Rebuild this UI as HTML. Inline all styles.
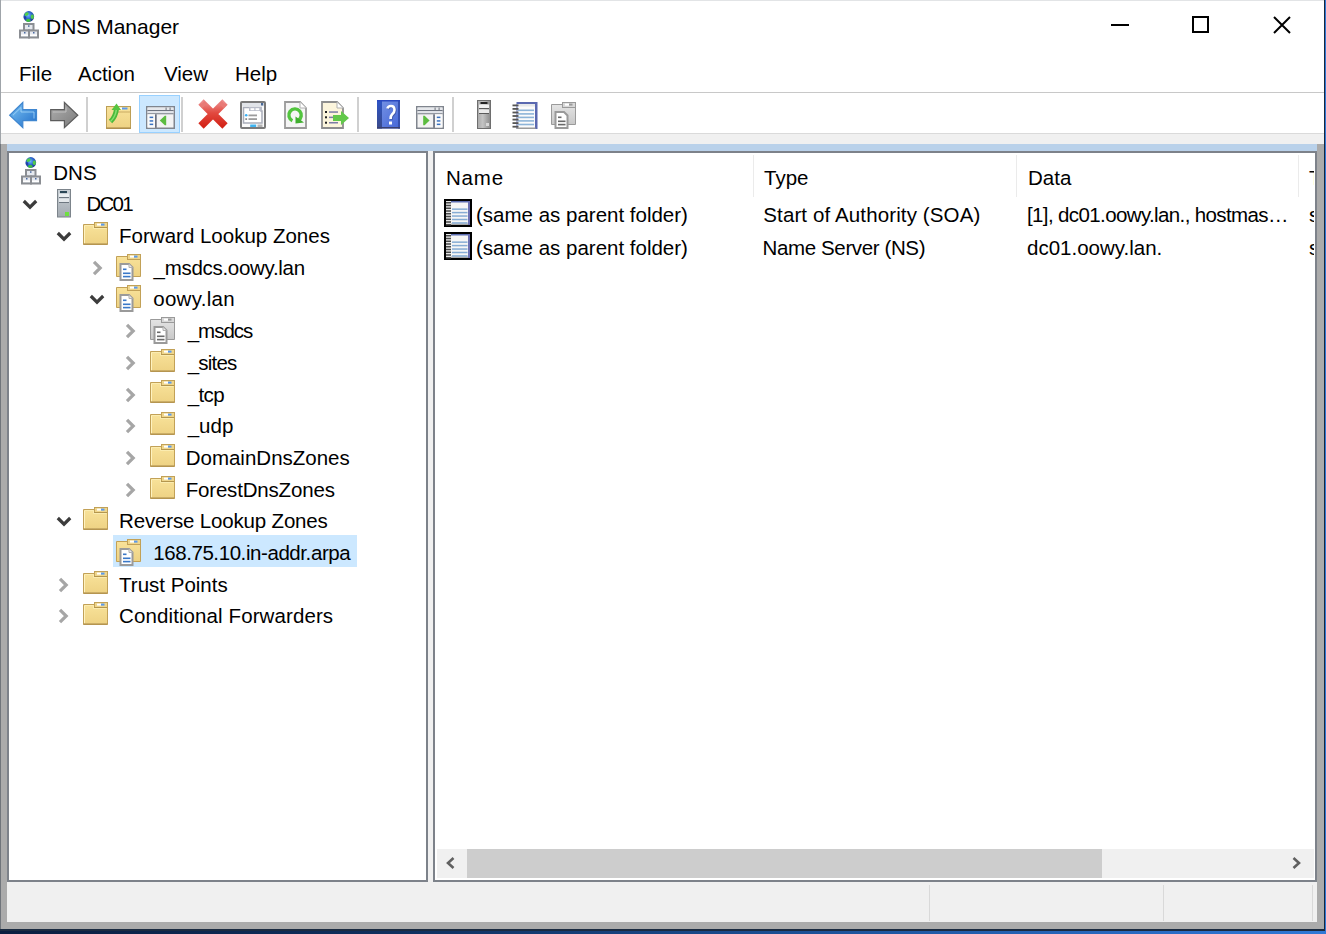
<!DOCTYPE html>
<html><head><meta charset="utf-8">
<style>
html,body{margin:0;padding:0;width:1326px;height:934px;overflow:hidden;position:relative;
 background:linear-gradient(90deg,#0a1e40 0%,#0f2f5e 30%,#1e56a0 66%,#2b6ec8 90%,#3079d6 100%);}
*{box-sizing:border-box}
.a{position:absolute}
.t{position:absolute;font-family:"Liberation Sans",sans-serif;font-size:20.5px;line-height:20px;white-space:nowrap;color:#000}
svg{position:absolute;overflow:visible}
</style></head><body>
<svg width="0" height="0" style="position:absolute">
<defs>
<linearGradient id="gFold" x1="0" y1="0" x2="0" y2="1"><stop offset="0" stop-color="#f8e29a"/><stop offset="1" stop-color="#eed283"/></linearGradient>
<linearGradient id="gFoldG" x1="0" y1="0" x2="0" y2="1"><stop offset="0" stop-color="#e4e4e4"/><stop offset="1" stop-color="#c8c8c8"/></linearGradient>
<radialGradient id="gGlobe" cx="0.45" cy="0.4" r="0.6"><stop offset="0" stop-color="#6ab8ff"/><stop offset="0.6" stop-color="#2a62c8"/><stop offset="1" stop-color="#1c3c8c"/></radialGradient>
<linearGradient id="gSrv" x1="0" y1="0" x2="0" y2="1"><stop offset="0" stop-color="#c9d0d6"/><stop offset="1" stop-color="#a3aab1"/></linearGradient>
<linearGradient id="gBlue" x1="0" y1="0" x2="1" y2="1"><stop offset="0" stop-color="#7cc4f4"/><stop offset="1" stop-color="#1f6cc8"/></linearGradient>
<linearGradient id="gGray" x1="0" y1="0" x2="1" y2="1"><stop offset="0" stop-color="#b0b0b0"/><stop offset="1" stop-color="#7a7a7a"/></linearGradient>
<linearGradient id="gRed" x1="0" y1="0" x2="0" y2="1"><stop offset="0" stop-color="#ec8a8a"/><stop offset="0.45" stop-color="#e24a40"/><stop offset="1" stop-color="#d42418"/></linearGradient>
<linearGradient id="gHelp" x1="0" y1="0" x2="1" y2="1"><stop offset="0" stop-color="#7a96e4"/><stop offset="1" stop-color="#4466d8"/></linearGradient><linearGradient id="gHelpL" x1="0" y1="0" x2="0" y2="1"><stop offset="0" stop-color="#2c54c8"/><stop offset="1" stop-color="#3a4a8a"/></linearGradient>
<linearGradient id="gSrvT" x1="0" y1="0" x2="1" y2="0"><stop offset="0" stop-color="#a8a8a8"/><stop offset="0.4" stop-color="#c4c4c4"/><stop offset="1" stop-color="#8a8a8a"/></linearGradient>
</defs></svg>

<div class="a" style="left:0px;top:0px;width:1325px;height:931px;background:#fff;"></div>
<div class="a" style="left:0px;top:0px;width:1325px;height:1px;background:#e2e4e6;"></div>
<div class="a" style="left:0px;top:0px;width:1px;height:931px;background:#9fa4a9;"></div>
<div class="a" style="left:0px;top:144px;width:1px;height:785px;background:#70757b;"></div>
<div class="a" style="left:1324px;top:0px;width:1px;height:931px;background:#17283f;"></div>
<div class="a" style="left:0px;top:929px;width:1325px;height:2px;background:#1b2b40;"></div>
<svg style="left:19px;top:11px" width="21" height="28" viewBox="0 0 21 28"><circle cx="9.8" cy="5.4" r="5.3" fill="url(#gGlobe)"/><ellipse cx="7.6" cy="3.2" rx="2.2" ry="1.6" fill="#4fd04a" transform="rotate(-30 7.6 3.2)"/><ellipse cx="13.3" cy="5.8" rx="1.6" ry="2.2" fill="#52c84c"/><ellipse cx="9.2" cy="9.3" rx="2.2" ry="1.6" fill="#3cc040"/><ellipse cx="6" cy="6.5" rx="1.2" ry="1.6" fill="#1f3fa8"/><rect x="5" y="13" width="9.5" height="6.5" fill="#e6e9ef" stroke="#8b8e93" stroke-width="2"/><rect x="9" y="14.3" width="1.5" height="1.5" fill="#4a6aa0"/><rect x="1" y="19.5" width="9" height="7" fill="#e6e9ef" stroke="#8b8e93" stroke-width="2"/><rect x="10" y="19.5" width="9" height="7" fill="#e6e9ef" stroke="#8b8e93" stroke-width="2"/><rect x="5" y="21" width="1.5" height="1.5" fill="#4a6aa0"/><rect x="14" y="21" width="1.5" height="1.5" fill="#4a6aa0"/><rect x="2" y="23.5" width="7" height="1.5" fill="#fff"/><rect x="11" y="23.5" width="7" height="1.5" fill="#fff"/></svg>
<div class="t" style="left:46px;top:17.0px;font-size:21px;">DNS Manager</div>
<div class="a" style="left:1111px;top:24px;width:18px;height:2px;background:#000;"></div>
<div class="a" style="left:1192px;top:16px;width:17px;height:17px;background:transparent;border:2px solid #000;"></div>
<svg style="left:1273px;top:16px" width="18" height="18" viewBox="0 0 18 18"><path d="M1 1L17 17M17 1L1 17" stroke="#000" stroke-width="2"/></svg>
<div class="t" style="left:19px;top:64.0px;">File</div>
<div class="t" style="left:78px;top:64.0px;">Action</div>
<div class="t" style="left:164px;top:64.0px;">View</div>
<div class="t" style="left:235px;top:64.0px;">Help</div>
<div class="a" style="left:1px;top:92px;width:1323px;height:1px;background:#c8c8c8;"></div>
<div class="a" style="left:1px;top:133px;width:1323px;height:1px;background:#dadada;"></div>
<div class="a" style="left:1px;top:134px;width:1323px;height:10px;background:#f0f0f0;"></div>
<svg style="left:9px;top:102px" width="29" height="27" viewBox="0 0 29 27"><path d="M0.7 13.2L13.8 0.5V7.6H27.5V18.7H13.8V25.7Z" fill="url(#gBlue)" stroke="#3f86d0" stroke-width="1.2"/><path d="M4 13.2L12 5.5V10H25V16.5" fill="none" stroke="#a8d8fa" stroke-width="1" opacity="0.8"/></svg>
<svg style="left:50px;top:102px" width="29" height="27" viewBox="0 0 29 27"><path d="M27.8 13.2L14.4 0.5V7.6H0.7V18.7H14.4V25.7Z" fill="url(#gGray)" stroke="#5c5c5c" stroke-width="1.2"/><path d="M3 10H16V5.5" fill="none" stroke="#c8c8c8" stroke-width="1" opacity="0.8"/></svg>
<div class="a" style="left:86px;top:97px;width:2px;height:35px;background:#d0d0d0;"></div>
<svg style="left:106px;top:103px" width="25" height="26" viewBox="0 0 25 26"><rect x="0.5" y="3.5" width="24" height="22" fill="url(#gFold)" stroke="#bd9f56"/><rect x="16" y="4.5" width="5.5" height="2" fill="#5a9aee"/><rect x="13" y="4.5" width="3" height="2" fill="#fff"/><line x1="12" y1="9" x2="24" y2="9" stroke="#c9ab62"/><line x1="0.5" y1="25" x2="24.5" y2="25" stroke="#a08044"/><path d="M4.5 18.5Q9.5 14 10.5 6" fill="none" stroke="#4cb83a" stroke-width="5"/><path d="M4.5 18.5Q9.5 14 10.5 6" fill="none" stroke="#86e070" stroke-width="1.5"/><path d="M5.5 7L10.5 0.5L15 7Z" fill="#56c440"/></svg>
<div class="a" style="left:139px;top:95px;width:41px;height:38px;background:#cce8ff;border:1px solid #99d1ff;"></div>
<svg style="left:146px;top:106px" width="29" height="23" viewBox="0 0 29 23"><rect x="0.75" y="0.75" width="27.5" height="21.5" fill="#f3f3f3" stroke="#80858e" stroke-width="1.5"/><rect x="1.5" y="1.5" width="26" height="2.5" fill="#e6e8ec"/><rect x="19.5" y="1.5" width="1.2" height="2.5" fill="#80858e"/><rect x="23.5" y="1.5" width="1.2" height="2.5" fill="#80858e"/><rect x="1.5" y="4" width="26" height="1.2" fill="#6e7480"/><rect x="1.5" y="5.2" width="26" height="1.9" fill="#e1e4ea"/><rect x="1.5" y="7.1" width="26" height="1.2" fill="#8a8f98"/><rect x="1.5" y="8.3" width="7.5" height="13.2" fill="#fafafa"/><rect x="9" y="8.3" width="1.7" height="13.5" fill="#6a7080"/><rect x="3.6" y="10.6" width="3.6" height="1.5" fill="#3a72c0"/><rect x="3.6" y="14.2" width="3.6" height="1.5" fill="#3a72c0"/><rect x="3.6" y="17.6" width="3.6" height="1.5" fill="#3a72c0"/><path d="M13.8 14.5L18.8 9.8H20.2V19.2H18.8Z" fill="#5cbc40"/></svg>
<div class="a" style="left:181px;top:97px;width:2px;height:35px;background:#d0d0d0;"></div>
<svg style="left:199px;top:100px" width="28" height="28" viewBox="0 0 28 28"><path d="M2 2L26 26M26 2L2 26" stroke="url(#gRed)" stroke-width="7.5" stroke-linecap="butt"/><path d="M1 5.5L5.5 1L8 3.5L3.5 8Z M27 5.5L22.5 1L20 3.5L24.5 8Z" fill="#e87a76"/></svg>
<svg style="left:240px;top:101px" width="26" height="28" viewBox="0 0 26 28"><rect x="1" y="1" width="24" height="26" rx="1" fill="#fafafa" stroke="#7a7a7a" stroke-width="2"/><rect x="2" y="2" width="22" height="3.2" fill="#e1e4e9"/><rect x="21" y="2" width="2.2" height="2.5" fill="#4a6a98"/><path d="M3.5 6.5H21V10H22V22H3.5Z" fill="#fff" stroke="#a9adb9" stroke-width="1.5"/><rect x="9" y="6" width="12.5" height="4" fill="#b9bdc9"/><rect x="10.5" y="7.2" width="3.8" height="2" fill="#fff"/><rect x="15.5" y="7.2" width="3.8" height="2" fill="#fff"/><circle cx="6.2" cy="14.3" r="1.3" fill="#3ab0f4"/><rect x="8.5" y="13.5" width="8.5" height="1.8" fill="#9c9c9c"/><rect x="5.3" y="17.2" width="1.8" height="1.8" fill="#8a8a8a"/><rect x="8.5" y="17.2" width="8.5" height="1.8" fill="#9c9c9c"/><rect x="10.2" y="23.5" width="6" height="2.5" fill="#3fb4f0"/><rect x="17.5" y="23.5" width="5" height="2.5" fill="#b4b4b4"/></svg>
<svg style="left:284px;top:101px" width="23" height="28" viewBox="0 0 23 28"><path d="M1 1H16L22 7V27H1Z" fill="#f5f5f5" stroke="#9a9a9a" stroke-width="1.8"/><path d="M16 1V7H22" fill="#fff" stroke="#b0b0b0" stroke-width="1"/><path d="M8.4 19.7A6.2 6.2 0 1 1 14.1 19.5" fill="none" stroke="#52c43e" stroke-width="3.4"/><path d="M11.5 15.5V22.5L20 21.5Z" fill="#3fae2e"/></svg>
<svg style="left:321px;top:101px" width="29" height="28" viewBox="0 0 29 28"><path d="M1 1H16L22 7V27H1Z" fill="#fcf5dc" stroke="#8e8e8e" stroke-width="1.8"/><path d="M16 1V7H22" fill="#fff" stroke="#b0b0b0" stroke-width="1"/><rect x="4" y="10" width="2" height="2" fill="#222"/><rect x="8" y="10.3" width="9" height="1.5" fill="#7c7ca6"/><rect x="4" y="15.3" width="2" height="2" fill="#222"/><rect x="8" y="15.6" width="9" height="1.5" fill="#7c7ca6"/><rect x="4" y="20.7" width="2" height="2" fill="#222"/><rect x="8" y="21" width="9" height="1.5" fill="#7c7ca6"/><path d="M12 14H20V10L28 17L20 24V20H12Z" fill="#62c84a"/></svg>
<div class="a" style="left:357px;top:97px;width:2px;height:35px;background:#d0d0d0;"></div>
<svg style="left:377px;top:100px" width="23" height="29" viewBox="0 0 23 29"><rect x="0" y="0" width="23" height="28.5" fill="url(#gHelp)"/><rect x="0" y="0" width="5" height="28.5" fill="url(#gHelpL)"/><rect x="21" y="0" width="2" height="28.5" fill="#3550b0"/><rect x="0" y="0" width="23" height="1.5" fill="#2a48c0"/><rect x="0" y="27" width="23" height="1.5" fill="#3a4070"/><path d="M10.5 8.5Q11 6 14 6Q17.5 6 17.5 10Q17.5 12.5 15 14.5Q13.6 15.8 13.6 19" fill="none" stroke="#2a3a7a" stroke-width="2.6" opacity="0.5" transform="translate(0.8,0.8)"/><path d="M10.5 8.5Q11 6 14 6Q17.5 6 17.5 10Q17.5 12.5 15 14.5Q13.6 15.8 13.6 19" fill="none" stroke="#fff" stroke-width="2.6"/><rect x="12" y="21.5" width="3" height="3" fill="#fff"/></svg>
<svg style="left:416px;top:106px" width="28" height="23" viewBox="0 0 28 23"><rect x="0.75" y="0.75" width="26.5" height="21.5" fill="#f3f3f3" stroke="#80858e" stroke-width="1.5"/><rect x="1.5" y="1.5" width="25" height="2.5" fill="#e6e8ec"/><rect x="18.5" y="1.5" width="1.2" height="2.5" fill="#80858e"/><rect x="22.5" y="1.5" width="1.2" height="2.5" fill="#80858e"/><rect x="1.5" y="4" width="25" height="1.2" fill="#6e7480"/><rect x="1.5" y="5.2" width="25" height="1.9" fill="#e1e4ea"/><rect x="1.5" y="7.1" width="25" height="1.2" fill="#8a8f98"/><rect x="18.8" y="8.3" width="7.7" height="13.2" fill="#fafafa"/><rect x="17.2" y="8.3" width="1.7" height="13.5" fill="#6a7080"/><rect x="20.8" y="10.6" width="3.6" height="1.5" fill="#3a72c0"/><rect x="20.8" y="14.2" width="3.6" height="1.5" fill="#3a72c0"/><rect x="20.8" y="17.6" width="3.6" height="1.5" fill="#3a72c0"/><path d="M7.2 9.8H8.6L13.6 14.5L8.6 19.2H7.2Z" fill="#5cbc40"/></svg>
<div class="a" style="left:452px;top:97px;width:2px;height:35px;background:#d0d0d0;"></div>
<svg style="left:477px;top:100px" width="14" height="29" viewBox="0 0 14 29"><rect x="0.5" y="0.5" width="13" height="28" fill="url(#gSrvT)" stroke="#6e6e6e"/><rect x="3.5" y="2" width="7" height="2" fill="#222"/><rect x="2" y="4.5" width="10" height="3.5" fill="#f0f0f0"/><rect x="2" y="8" width="10" height="1" fill="#5a5a5a"/><rect x="2" y="9.5" width="10" height="3.5" fill="#eaeaea"/><rect x="2" y="13" width="10" height="1" fill="#5a5a5a"/><rect x="9" y="23" width="3" height="3" fill="#d8d8d8"/></svg>
<svg style="left:512px;top:102px" width="26" height="27" viewBox="0 0 26 27"><rect x="4.5" y="0" width="21" height="27" fill="#5a68b0"/><rect x="5.5" y="2" width="17.5" height="24" fill="#fbfbfb"/><rect x="5.5" y="2" width="17.5" height="2.5" fill="#e6e8ea"/><rect x="6" y="7.5" width="16" height="1.6" fill="#8db4d8"/><rect x="6" y="11.1" width="16" height="1.6" fill="#8db4d8"/><rect x="6" y="14.6" width="16" height="1.6" fill="#8db4d8"/><rect x="6" y="18.1" width="16" height="1.6" fill="#8db4d8"/><rect x="6" y="21.7" width="16" height="1.6" fill="#8db4d8"/><rect x="4.5" y="25.5" width="19" height="1.5" fill="#9a9a9a"/><rect x="0.5" y="2.5" width="6" height="1.8" fill="#555"/><rect x="0.5" y="6.0" width="6" height="1.8" fill="#555"/><rect x="0.5" y="9.6" width="6" height="1.8" fill="#555"/><rect x="0.5" y="13.1" width="6" height="1.8" fill="#555"/><rect x="0.5" y="16.7" width="6" height="1.8" fill="#555"/><rect x="0.5" y="20.2" width="6" height="1.8" fill="#555"/><rect x="0.5" y="23.8" width="6" height="1.8" fill="#555"/></svg>
<svg style="left:551px;top:102px" width="26" height="27" viewBox="0 0 26 27"><path d="M0.5 2.5H11.5V5.5H24.5V22.5H0.5Z" fill="url(#gFoldG)" stroke="#9a9a9a"/><rect x="11.5" y="0.5" width="13" height="5" fill="#d8d8d8" stroke="#9a9a9a"/><rect x="14" y="1.6" width="4" height="2" fill="#fff"/><rect x="18" y="1.6" width="3.5" height="2" fill="#9a9a9a"/><g transform="translate(3.5,9)"><path d="M1 1H9.5L13 4.5V17H1Z" fill="#fff" stroke="#9a9a9a" stroke-width="2"/><rect x="3.5" y="5.5" width="3.5" height="1.6" fill="#6a6a6a"/><rect x="3.5" y="9.5" width="7.5" height="1.6" fill="#6a6a6a"/><rect x="3.5" y="12.8" width="7.5" height="1.6" fill="#6a6a6a"/></g></svg>
<div class="a" style="left:1px;top:144px;width:1323px;height:785px;background:#ababab;"></div>
<div class="a" style="left:7px;top:144px;width:1310px;height:7px;background:#b9d1ea;"></div>
<div class="a" style="left:7px;top:151px;width:421px;height:731px;background:#fff;border:2px solid #7d828a;"></div>
<div class="a" style="left:428px;top:151px;width:5px;height:731px;background:#f0f0f0;"></div>
<div class="a" style="left:433px;top:151px;width:884px;height:731px;background:#fff;border:2px solid #7d828a;"></div>
<div class="a" style="left:7px;top:882px;width:1310px;height:40px;background:#f0f0f0;"></div>
<div class="a" style="left:113px;top:535px;width:244px;height:32px;background:#cce8ff;"></div>
<svg style="left:21px;top:157px" width="21" height="28" viewBox="0 0 21 28"><circle cx="9.8" cy="5.4" r="5.3" fill="url(#gGlobe)"/><ellipse cx="7.6" cy="3.2" rx="2.2" ry="1.6" fill="#4fd04a" transform="rotate(-30 7.6 3.2)"/><ellipse cx="13.3" cy="5.8" rx="1.6" ry="2.2" fill="#52c84c"/><ellipse cx="9.2" cy="9.3" rx="2.2" ry="1.6" fill="#3cc040"/><ellipse cx="6" cy="6.5" rx="1.2" ry="1.6" fill="#1f3fa8"/><rect x="5" y="13" width="9.5" height="6.5" fill="#e6e9ef" stroke="#8b8e93" stroke-width="2"/><rect x="9" y="14.3" width="1.5" height="1.5" fill="#4a6aa0"/><rect x="1" y="19.5" width="9" height="7" fill="#e6e9ef" stroke="#8b8e93" stroke-width="2"/><rect x="10" y="19.5" width="9" height="7" fill="#e6e9ef" stroke="#8b8e93" stroke-width="2"/><rect x="5" y="21" width="1.5" height="1.5" fill="#4a6aa0"/><rect x="14" y="21" width="1.5" height="1.5" fill="#4a6aa0"/><rect x="2" y="23.5" width="7" height="1.5" fill="#fff"/><rect x="11" y="23.5" width="7" height="1.5" fill="#fff"/></svg>
<div class="t" style="left:53.3px;top:162.6px;">DNS</div>
<svg style="left:22.2px;top:199.1px" width="16" height="12" viewBox="0 0 16 12"><polyline points="1.8,2 8,8.2 14.2,2" fill="none" stroke="#3c3c3c" stroke-width="3.2"/></svg>
<svg style="left:57px;top:189px" width="14" height="29" viewBox="0 0 14 29"><rect x="0.5" y="0.5" width="13" height="27.5" fill="url(#gSrv)" stroke="#7c848b"/><rect x="3" y="2" width="7" height="2.2" fill="#2a4656"/><rect x="2" y="4.5" width="10" height="3.5" fill="#e9edf0"/><rect x="2" y="8" width="10" height="1" fill="#6d7780"/><rect x="2" y="9.5" width="10" height="3.5" fill="#e4e8eb"/><rect x="2" y="13" width="10" height="1" fill="#6d7780"/><rect x="8" y="23" width="4" height="4" fill="#6fe040"/></svg>
<div class="t" style="left:86.6px;top:194.3px;letter-spacing:-1.8px">DC01</div>
<svg style="left:55.7px;top:230.8px" width="16" height="12" viewBox="0 0 16 12"><polyline points="1.8,2 8,8.2 14.2,2" fill="none" stroke="#3c3c3c" stroke-width="3.2"/></svg>
<svg style="left:83px;top:222px" width="25" height="23" viewBox="0 0 25 23"><path d="M0.5 2.5H11.5V5.5H24.5V22.5H0.5Z" fill="url(#gFold)" stroke="#c2a157"/><rect x="11.5" y="0.5" width="13" height="5" fill="#efd68c" stroke="#c2a157"/><rect x="14" y="1.6" width="4" height="2" fill="#fff"/><rect x="18" y="1.6" width="3.5" height="2" fill="#5a9aee"/><path d="M1.5 3.5H10.5V6.5H23.5" fill="none" stroke="#fbecb0"/><line x1="1.5" y1="4" x2="1.5" y2="21.5" stroke="#fff3c0"/><line x1="11" y1="5.5" x2="24" y2="5.5" stroke="#b4964e"/><line x1="0.5" y1="22" x2="24.5" y2="22" stroke="#a8894a"/></svg>
<div class="t" style="left:119.1px;top:226.0px;">Forward Lookup Zones</div>
<svg style="left:91.8px;top:259.7px" width="12" height="16" viewBox="0 0 12 16"><polyline points="2,1.8 8.2,8 2,14.2" fill="none" stroke="#a6a6a6" stroke-width="3.2"/></svg>
<svg style="left:116px;top:254px" width="26" height="27" viewBox="0 0 26 27"><path d="M0.5 2.5H11.5V5.5H24.5V22.5H0.5Z" fill="url(#gFold)" stroke="#c2a157"/><rect x="11.5" y="0.5" width="13" height="5" fill="#efd68c" stroke="#c2a157"/><rect x="14" y="1.6" width="4" height="2" fill="#fff"/><rect x="18" y="1.6" width="3.5" height="2" fill="#5a9aee"/><g transform="translate(3.5,9)"><path d="M1 1H9.5L13 4.5V17H1Z" fill="#fff" stroke="#9a9a9a" stroke-width="2"/><path d="M9.5 1V4.5H13" fill="#e8e8e8" stroke="#b0b0b0" stroke-width="1"/><rect x="3.5" y="5.5" width="3.5" height="1.6" fill="#3a78c8"/><rect x="3.5" y="9.5" width="7.5" height="1.6" fill="#3a78c8"/><rect x="3.5" y="12.8" width="7.5" height="1.6" fill="#3a78c8"/></g></svg>
<div class="t" style="left:153.6px;top:257.7px;letter-spacing:-0.3px">_msdcs.oowy.lan</div>
<svg style="left:89.2px;top:294.2px" width="16" height="12" viewBox="0 0 16 12"><polyline points="1.8,2 8,8.2 14.2,2" fill="none" stroke="#3c3c3c" stroke-width="3.2"/></svg>
<svg style="left:116px;top:285px" width="26" height="27" viewBox="0 0 26 27"><path d="M0.5 2.5H11.5V5.5H24.5V22.5H0.5Z" fill="url(#gFold)" stroke="#c2a157"/><rect x="11.5" y="0.5" width="13" height="5" fill="#efd68c" stroke="#c2a157"/><rect x="14" y="1.6" width="4" height="2" fill="#fff"/><rect x="18" y="1.6" width="3.5" height="2" fill="#5a9aee"/><g transform="translate(3.5,9)"><path d="M1 1H9.5L13 4.5V17H1Z" fill="#fff" stroke="#9a9a9a" stroke-width="2"/><path d="M9.5 1V4.5H13" fill="#e8e8e8" stroke="#b0b0b0" stroke-width="1"/><rect x="3.5" y="5.5" width="3.5" height="1.6" fill="#3a78c8"/><rect x="3.5" y="9.5" width="7.5" height="1.6" fill="#3a78c8"/><rect x="3.5" y="12.8" width="7.5" height="1.6" fill="#3a78c8"/></g></svg>
<div class="t" style="left:153.2px;top:289.4px;letter-spacing:0.3px">oowy.lan</div>
<svg style="left:125.29999999999998px;top:323.1px" width="12" height="16" viewBox="0 0 12 16"><polyline points="2,1.8 8.2,8 2,14.2" fill="none" stroke="#a6a6a6" stroke-width="3.2"/></svg>
<svg style="left:150px;top:317px" width="26" height="27" viewBox="0 0 26 27"><path d="M0.5 2.5H11.5V5.5H24.5V22.5H0.5Z" fill="url(#gFoldG)" stroke="#9a9a9a"/><rect x="11.5" y="0.5" width="13" height="5" fill="#d8d8d8" stroke="#9a9a9a"/><rect x="14" y="1.6" width="4" height="2" fill="#fff"/><rect x="18" y="1.6" width="3.5" height="2" fill="#9a9a9a"/><g transform="translate(3.5,9)"><path d="M1 1H9.5L13 4.5V17H1Z" fill="#fff" stroke="#9a9a9a" stroke-width="2"/><path d="M9.5 1V4.5H13" fill="#e8e8e8" stroke="#b0b0b0" stroke-width="1"/><rect x="3.5" y="5.5" width="3.5" height="1.6" fill="#6a6a6a"/><rect x="3.5" y="9.5" width="7.5" height="1.6" fill="#6a6a6a"/><rect x="3.5" y="12.8" width="7.5" height="1.6" fill="#6a6a6a"/></g></svg>
<div class="t" style="left:187.7px;top:321.1px;letter-spacing:-1.0px">_msdcs</div>
<svg style="left:125.29999999999998px;top:354.79999999999995px" width="12" height="16" viewBox="0 0 12 16"><polyline points="2,1.8 8.2,8 2,14.2" fill="none" stroke="#a6a6a6" stroke-width="3.2"/></svg>
<svg style="left:150px;top:349px" width="25" height="23" viewBox="0 0 25 23"><path d="M0.5 2.5H11.5V5.5H24.5V22.5H0.5Z" fill="url(#gFold)" stroke="#c2a157"/><rect x="11.5" y="0.5" width="13" height="5" fill="#efd68c" stroke="#c2a157"/><rect x="14" y="1.6" width="4" height="2" fill="#fff"/><rect x="18" y="1.6" width="3.5" height="2" fill="#5a9aee"/><path d="M1.5 3.5H10.5V6.5H23.5" fill="none" stroke="#fbecb0"/><line x1="1.5" y1="4" x2="1.5" y2="21.5" stroke="#fff3c0"/><line x1="11" y1="5.5" x2="24" y2="5.5" stroke="#b4964e"/><line x1="0.5" y1="22" x2="24.5" y2="22" stroke="#a8894a"/></svg>
<div class="t" style="left:187.7px;top:352.8px;letter-spacing:-0.8px">_sites</div>
<svg style="left:125.29999999999998px;top:386.5px" width="12" height="16" viewBox="0 0 12 16"><polyline points="2,1.8 8.2,8 2,14.2" fill="none" stroke="#a6a6a6" stroke-width="3.2"/></svg>
<svg style="left:150px;top:380px" width="25" height="23" viewBox="0 0 25 23"><path d="M0.5 2.5H11.5V5.5H24.5V22.5H0.5Z" fill="url(#gFold)" stroke="#c2a157"/><rect x="11.5" y="0.5" width="13" height="5" fill="#efd68c" stroke="#c2a157"/><rect x="14" y="1.6" width="4" height="2" fill="#fff"/><rect x="18" y="1.6" width="3.5" height="2" fill="#5a9aee"/><path d="M1.5 3.5H10.5V6.5H23.5" fill="none" stroke="#fbecb0"/><line x1="1.5" y1="4" x2="1.5" y2="21.5" stroke="#fff3c0"/><line x1="11" y1="5.5" x2="24" y2="5.5" stroke="#b4964e"/><line x1="0.5" y1="22" x2="24.5" y2="22" stroke="#a8894a"/></svg>
<div class="t" style="left:187.7px;top:384.5px;letter-spacing:-0.6px">_tcp</div>
<svg style="left:125.29999999999998px;top:418.2px" width="12" height="16" viewBox="0 0 12 16"><polyline points="2,1.8 8.2,8 2,14.2" fill="none" stroke="#a6a6a6" stroke-width="3.2"/></svg>
<svg style="left:150px;top:412px" width="25" height="23" viewBox="0 0 25 23"><path d="M0.5 2.5H11.5V5.5H24.5V22.5H0.5Z" fill="url(#gFold)" stroke="#c2a157"/><rect x="11.5" y="0.5" width="13" height="5" fill="#efd68c" stroke="#c2a157"/><rect x="14" y="1.6" width="4" height="2" fill="#fff"/><rect x="18" y="1.6" width="3.5" height="2" fill="#5a9aee"/><path d="M1.5 3.5H10.5V6.5H23.5" fill="none" stroke="#fbecb0"/><line x1="1.5" y1="4" x2="1.5" y2="21.5" stroke="#fff3c0"/><line x1="11" y1="5.5" x2="24" y2="5.5" stroke="#b4964e"/><line x1="0.5" y1="22" x2="24.5" y2="22" stroke="#a8894a"/></svg>
<div class="t" style="left:187.7px;top:416.2px;">_udp</div>
<svg style="left:125.29999999999998px;top:449.9px" width="12" height="16" viewBox="0 0 12 16"><polyline points="2,1.8 8.2,8 2,14.2" fill="none" stroke="#a6a6a6" stroke-width="3.2"/></svg>
<svg style="left:150px;top:444px" width="25" height="23" viewBox="0 0 25 23"><path d="M0.5 2.5H11.5V5.5H24.5V22.5H0.5Z" fill="url(#gFold)" stroke="#c2a157"/><rect x="11.5" y="0.5" width="13" height="5" fill="#efd68c" stroke="#c2a157"/><rect x="14" y="1.6" width="4" height="2" fill="#fff"/><rect x="18" y="1.6" width="3.5" height="2" fill="#5a9aee"/><path d="M1.5 3.5H10.5V6.5H23.5" fill="none" stroke="#fbecb0"/><line x1="1.5" y1="4" x2="1.5" y2="21.5" stroke="#fff3c0"/><line x1="11" y1="5.5" x2="24" y2="5.5" stroke="#b4964e"/><line x1="0.5" y1="22" x2="24.5" y2="22" stroke="#a8894a"/></svg>
<div class="t" style="left:185.7px;top:447.9px;">DomainDnsZones</div>
<svg style="left:125.29999999999998px;top:481.6px" width="12" height="16" viewBox="0 0 12 16"><polyline points="2,1.8 8.2,8 2,14.2" fill="none" stroke="#a6a6a6" stroke-width="3.2"/></svg>
<svg style="left:150px;top:476px" width="25" height="23" viewBox="0 0 25 23"><path d="M0.5 2.5H11.5V5.5H24.5V22.5H0.5Z" fill="url(#gFold)" stroke="#c2a157"/><rect x="11.5" y="0.5" width="13" height="5" fill="#efd68c" stroke="#c2a157"/><rect x="14" y="1.6" width="4" height="2" fill="#fff"/><rect x="18" y="1.6" width="3.5" height="2" fill="#5a9aee"/><path d="M1.5 3.5H10.5V6.5H23.5" fill="none" stroke="#fbecb0"/><line x1="1.5" y1="4" x2="1.5" y2="21.5" stroke="#fff3c0"/><line x1="11" y1="5.5" x2="24" y2="5.5" stroke="#b4964e"/><line x1="0.5" y1="22" x2="24.5" y2="22" stroke="#a8894a"/></svg>
<div class="t" style="left:185.7px;top:479.6px;letter-spacing:-0.18px">ForestDnsZones</div>
<svg style="left:55.7px;top:516.0999999999999px" width="16" height="12" viewBox="0 0 16 12"><polyline points="1.8,2 8,8.2 14.2,2" fill="none" stroke="#3c3c3c" stroke-width="3.2"/></svg>
<svg style="left:83px;top:507px" width="25" height="23" viewBox="0 0 25 23"><path d="M0.5 2.5H11.5V5.5H24.5V22.5H0.5Z" fill="url(#gFold)" stroke="#c2a157"/><rect x="11.5" y="0.5" width="13" height="5" fill="#efd68c" stroke="#c2a157"/><rect x="14" y="1.6" width="4" height="2" fill="#fff"/><rect x="18" y="1.6" width="3.5" height="2" fill="#5a9aee"/><path d="M1.5 3.5H10.5V6.5H23.5" fill="none" stroke="#fbecb0"/><line x1="1.5" y1="4" x2="1.5" y2="21.5" stroke="#fff3c0"/><line x1="11" y1="5.5" x2="24" y2="5.5" stroke="#b4964e"/><line x1="0.5" y1="22" x2="24.5" y2="22" stroke="#a8894a"/></svg>
<div class="t" style="left:119.1px;top:511.3px;letter-spacing:-0.17px">Reverse Lookup Zones</div>
<svg style="left:116px;top:539px" width="26" height="27" viewBox="0 0 26 27"><path d="M0.5 2.5H11.5V5.5H24.5V22.5H0.5Z" fill="url(#gFold)" stroke="#c2a157"/><rect x="11.5" y="0.5" width="13" height="5" fill="#efd68c" stroke="#c2a157"/><rect x="14" y="1.6" width="4" height="2" fill="#fff"/><rect x="18" y="1.6" width="3.5" height="2" fill="#5a9aee"/><g transform="translate(3.5,9)"><path d="M1 1H9.5L13 4.5V17H1Z" fill="#fff" stroke="#9a9a9a" stroke-width="2"/><path d="M9.5 1V4.5H13" fill="#e8e8e8" stroke="#b0b0b0" stroke-width="1"/><rect x="3.5" y="5.5" width="3.5" height="1.6" fill="#3a78c8"/><rect x="3.5" y="9.5" width="7.5" height="1.6" fill="#3a78c8"/><rect x="3.5" y="12.8" width="7.5" height="1.6" fill="#3a78c8"/></g></svg>
<div class="t" style="left:153.2px;top:543.0px;letter-spacing:-0.42px">168.75.10.in-addr.arpa</div>
<svg style="left:58.3px;top:576.6999999999999px" width="12" height="16" viewBox="0 0 12 16"><polyline points="2,1.8 8.2,8 2,14.2" fill="none" stroke="#a6a6a6" stroke-width="3.2"/></svg>
<svg style="left:83px;top:571px" width="25" height="23" viewBox="0 0 25 23"><path d="M0.5 2.5H11.5V5.5H24.5V22.5H0.5Z" fill="url(#gFold)" stroke="#c2a157"/><rect x="11.5" y="0.5" width="13" height="5" fill="#efd68c" stroke="#c2a157"/><rect x="14" y="1.6" width="4" height="2" fill="#fff"/><rect x="18" y="1.6" width="3.5" height="2" fill="#5a9aee"/><path d="M1.5 3.5H10.5V6.5H23.5" fill="none" stroke="#fbecb0"/><line x1="1.5" y1="4" x2="1.5" y2="21.5" stroke="#fff3c0"/><line x1="11" y1="5.5" x2="24" y2="5.5" stroke="#b4964e"/><line x1="0.5" y1="22" x2="24.5" y2="22" stroke="#a8894a"/></svg>
<div class="t" style="left:119.1px;top:574.7px;">Trust Points</div>
<svg style="left:58.3px;top:608.4px" width="12" height="16" viewBox="0 0 12 16"><polyline points="2,1.8 8.2,8 2,14.2" fill="none" stroke="#a6a6a6" stroke-width="3.2"/></svg>
<svg style="left:83px;top:602px" width="25" height="23" viewBox="0 0 25 23"><path d="M0.5 2.5H11.5V5.5H24.5V22.5H0.5Z" fill="url(#gFold)" stroke="#c2a157"/><rect x="11.5" y="0.5" width="13" height="5" fill="#efd68c" stroke="#c2a157"/><rect x="14" y="1.6" width="4" height="2" fill="#fff"/><rect x="18" y="1.6" width="3.5" height="2" fill="#5a9aee"/><path d="M1.5 3.5H10.5V6.5H23.5" fill="none" stroke="#fbecb0"/><line x1="1.5" y1="4" x2="1.5" y2="21.5" stroke="#fff3c0"/><line x1="11" y1="5.5" x2="24" y2="5.5" stroke="#b4964e"/><line x1="0.5" y1="22" x2="24.5" y2="22" stroke="#a8894a"/></svg>
<div class="t" style="left:119.1px;top:606.4px;letter-spacing:0.1px">Conditional Forwarders</div>
<div class="t" style="left:446px;top:168.0px;letter-spacing:0.8px">Name</div>
<div class="t" style="left:764px;top:168.0px;">Type</div>
<div class="t" style="left:1028px;top:168.0px;">Data</div>
<div class="a" style="left:753px;top:155px;width:1px;height:42px;background:#ebebeb;"></div>
<div class="a" style="left:1016px;top:155px;width:1px;height:42px;background:#ebebeb;"></div>
<div class="a" style="left:1298px;top:155px;width:1px;height:42px;background:#ebebeb;"></div>
<svg style="left:444px;top:199px" width="28" height="28" viewBox="0 0 28 28"><rect x="0" y="0" width="28" height="28" fill="#000"/><rect x="2" y="2" width="24" height="24" fill="#f6f6f6"/><rect x="7" y="2" width="19" height="1.5" fill="#5b6cb0"/><rect x="24" y="2" width="2" height="24" fill="#6b70b2"/><rect x="7" y="24.5" width="17" height="1.5" fill="#a8a8a8"/><rect x="2" y="2" width="5" height="24" fill="#e8e8e8"/><rect x="2" y="3.00" width="5" height="1.5" fill="#4a4a4a"/><rect x="2" y="5.75" width="5" height="1.5" fill="#4a4a4a"/><rect x="2" y="8.50" width="5" height="1.5" fill="#4a4a4a"/><rect x="2" y="11.25" width="5" height="1.5" fill="#4a4a4a"/><rect x="2" y="14.00" width="5" height="1.5" fill="#4a4a4a"/><rect x="2" y="16.75" width="5" height="1.5" fill="#4a4a4a"/><rect x="2" y="19.50" width="5" height="1.5" fill="#4a4a4a"/><rect x="2" y="22.25" width="5" height="1.5" fill="#4a4a4a"/><rect x="2" y="25.00" width="5" height="1.5" fill="#4a4a4a"/><rect x="8" y="9.40" width="15.5" height="1.5" fill="#86acd4"/><rect x="8" y="12.85" width="15.5" height="1.5" fill="#86acd4"/><rect x="8" y="16.30" width="15.5" height="1.5" fill="#86acd4"/><rect x="8" y="19.75" width="15.5" height="1.5" fill="#86acd4"/><rect x="8" y="23.20" width="15.5" height="1.5" fill="#86acd4"/></svg>
<div class="t" style="left:476px;top:205.0px;">(same as parent folder)</div>
<div class="t" style="left:763.3px;top:205.0px;letter-spacing:0.12px">Start of Authority (SOA)</div>
<div class="t" style="left:1027px;top:205.0px;letter-spacing:-0.62px">[1], dc01.oowy.lan., hostmas…</div>
<svg style="left:444px;top:232px" width="28" height="28" viewBox="0 0 28 28"><rect x="0" y="0" width="28" height="28" fill="#000"/><rect x="2" y="2" width="24" height="24" fill="#f6f6f6"/><rect x="7" y="2" width="19" height="1.5" fill="#5b6cb0"/><rect x="24" y="2" width="2" height="24" fill="#6b70b2"/><rect x="7" y="24.5" width="17" height="1.5" fill="#a8a8a8"/><rect x="2" y="2" width="5" height="24" fill="#e8e8e8"/><rect x="2" y="3.00" width="5" height="1.5" fill="#4a4a4a"/><rect x="2" y="5.75" width="5" height="1.5" fill="#4a4a4a"/><rect x="2" y="8.50" width="5" height="1.5" fill="#4a4a4a"/><rect x="2" y="11.25" width="5" height="1.5" fill="#4a4a4a"/><rect x="2" y="14.00" width="5" height="1.5" fill="#4a4a4a"/><rect x="2" y="16.75" width="5" height="1.5" fill="#4a4a4a"/><rect x="2" y="19.50" width="5" height="1.5" fill="#4a4a4a"/><rect x="2" y="22.25" width="5" height="1.5" fill="#4a4a4a"/><rect x="2" y="25.00" width="5" height="1.5" fill="#4a4a4a"/><rect x="8" y="9.40" width="15.5" height="1.5" fill="#86acd4"/><rect x="8" y="12.85" width="15.5" height="1.5" fill="#86acd4"/><rect x="8" y="16.30" width="15.5" height="1.5" fill="#86acd4"/><rect x="8" y="19.75" width="15.5" height="1.5" fill="#86acd4"/><rect x="8" y="23.20" width="15.5" height="1.5" fill="#86acd4"/></svg>
<div class="t" style="left:476px;top:238.3px;">(same as parent folder)</div>
<div class="t" style="left:762.6px;top:238.3px;letter-spacing:-0.38px">Name Server (NS)</div>
<div class="t" style="left:1027px;top:238.3px;">dc01.oowy.lan.</div>
<div class="a" style="left:1299px;top:153px;width:15px;height:120px;overflow:hidden">
<div class="t" style="left:10px;top:15.0px">T</div>
<div class="t" style="left:10px;top:52.0px">s</div>
<div class="t" style="left:10px;top:85.3px">s</div>
</div>
<div class="a" style="left:437px;top:849px;width:877px;height:29px;background:#f0f0f0;"></div>
<div class="a" style="left:467px;top:849px;width:635px;height:29px;background:#cdcdcd;"></div>
<svg style="left:445px;top:857px" width="10" height="12" viewBox="0 0 10 12"><polyline points="8.5,1 3,6 8.5,11" fill="none" stroke="#606060" stroke-width="2.6"/></svg>
<svg style="left:1292px;top:857px" width="10" height="12" viewBox="0 0 10 12"><polyline points="1.5,1 7,6 1.5,11" fill="none" stroke="#606060" stroke-width="2.6"/></svg>
<div class="a" style="left:929px;top:885px;width:1px;height:36px;background:#d9d9d9;"></div>
<div class="a" style="left:1163px;top:885px;width:1px;height:36px;background:#d9d9d9;"></div>
<div class="a" style="left:1312px;top:885px;width:1px;height:36px;background:#d9d9d9;"></div>
</body></html>
